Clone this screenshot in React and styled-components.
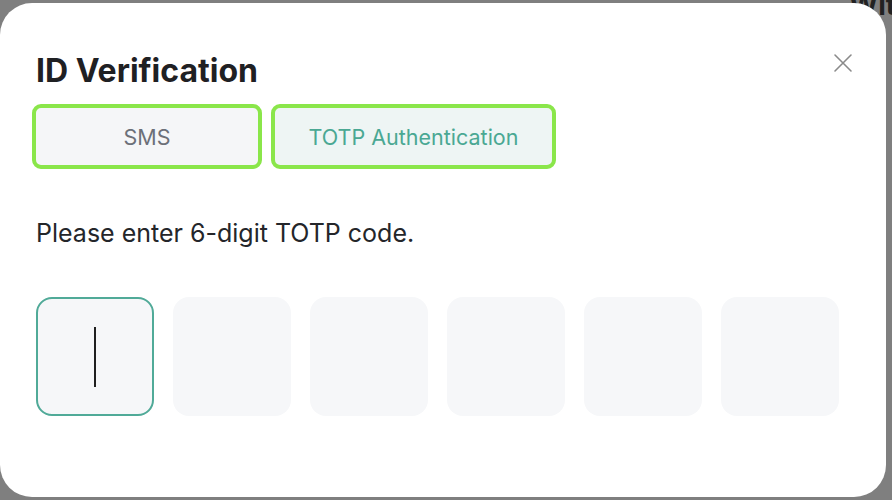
import React from "react";
import styled, { createGlobalStyle } from "styled-components";

const GlobalStyle = createGlobalStyle`
  html, body {
    margin: 0;
    padding: 0;
    background: #7f7f7f;
    font-family: Inter, "Noto Sans", "Liberation Sans", sans-serif;
  }
  * { box-sizing: border-box; }
`;

export default function App() {
  const digits = ["", "", "", "", "", ""];

  return (
    <>
      <GlobalStyle />
      <Backdrop>
        <BehindText>Wit</BehindText>
        <Modal>
          <Header>
            <Title>ID Verification</Title>
            <CloseButton aria-label="Close">
              <svg width="20" height="20" viewBox="0 0 20 20" fill="none">
                <path
                  d="M2 2L18 18M18 2L2 18"
                  stroke="#8a8a8a"
                  strokeWidth="1.6"
                  strokeLinecap="round"
                />
              </svg>
            </CloseButton>
          </Header>
          <Tabs>
            <Tab $width={230}>SMS</Tab>
            <Tab $width={285} $active>
              TOTP Authentication
            </Tab>
          </Tabs>
          <Prompt>Please enter 6-digit TOTP code.</Prompt>
          <CodeRow>
            {digits.map((d, i) => (
              <CodeBox key={i} $focused={i === 0}>
                {i === 0 && <Caret />}
              </CodeBox>
            ))}
          </CodeRow>
        </Modal>
      </Backdrop>
    </>
  );
}

const Backdrop = styled.div`
  position: relative;
  width: 892px;
  height: 500px;
  padding-top: 3px;
  overflow: hidden;
`;

const BehindText = styled.div`
  position: absolute;
  top: -12px;
  right: -4px;
  font-size: 28px;
  font-weight: 700;
  color: #222;
`;

const Modal = styled.div`
  position: relative;
  width: 886px;
  height: 494px;
  background: #ffffff;
  border-radius: 32px;
  padding: 49px 48px 0 36px;
`;

const Header = styled.div`
  display: flex;
  justify-content: space-between;
  align-items: flex-start;
`;

const Title = styled.h1`
  margin: 0;
  font-size: 32px;
  line-height: 38px;
  font-weight: 700;
  color: #1f2023;
  letter-spacing: 0;
`;

const CloseButton = styled.button`
  border: none;
  background: none;
  padding: 0;
  margin: 1px -15px 0 0;
  width: 20px;
  height: 20px;
  cursor: pointer;
  display: flex;
`;

const Tabs = styled.div`
  display: flex;
  gap: 9px;
  margin: 14px 0 0 -4px;
`;

const Tab = styled.button`
  width: ${({ $width }) => $width}px;
  height: 65px;
  border: 4px solid #8ae64a;
  border-radius: 9px;
  background: ${({ $active }) => ($active ? "#eef5f4" : "#f5f6f8")};
  color: ${({ $active }) => ($active ? "#4aa893" : "#6c7079")};
  font-family: inherit;
  font-size: 21.5px;
  font-weight: 400;
  display: flex;
  align-items: center;
  justify-content: center;
  cursor: pointer;
`;

const Prompt = styled.p`
  margin: 49px 0 0;
  font-size: 25px;
  line-height: 30px;
  color: #24262a;
`;

const CodeRow = styled.div`
  display: flex;
  gap: 19px;
  margin-top: 49px;
`;

const CodeBox = styled.div`
  flex: 0 0 118px;
  height: 119px;
  border-radius: 16px;
  background: #f6f7f9;
  border: 2px solid ${({ $focused }) => ($focused ? "#50aa98" : "transparent")};
  display: flex;
  align-items: center;
  justify-content: center;
`;

const Caret = styled.span`
  display: block;
  width: 2px;
  height: 60px;
  background: #1f1f1f;
`;
